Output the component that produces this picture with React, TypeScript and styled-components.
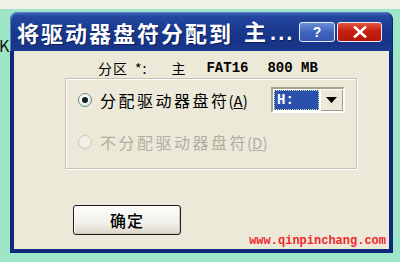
import React from 'react';
import styled, { createGlobalStyle } from 'styled-components';

const GlobalStyle = createGlobalStyle`
  html, body {
    margin: 0;
    padding: 0;
  }
  body {
    font-family: 'Noto Sans CJK SC', 'Noto Sans', sans-serif;
  }
`;

const App = () => {
  return (
    <Root>
      <GlobalStyle />
      <TopStrip />
      <Main>
        <Side>K石</Side>
        <Dialog>
          <TitleBar>
            <Title>
              将驱动器盘符分配到<TitleTail>主<Dots>...</Dots></TitleTail>
            </Title>
            <CapButton>?</CapButton>
            <CapButton $close>
              <svg width="16" height="12" viewBox="0 0 16 12">
                <path d="M3 1.5 L13 10.5 M13 1.5 L3 10.5" stroke="#fff" strokeWidth="2.6" strokeLinecap="square" />
              </svg>
            </CapButton>
          </TitleBar>
          <Body>
            <Info>
              <InfoPart>分区</InfoPart>
              <InfoPart $gap={7}>*:</InfoPart>
              <InfoPart $gap={24}>主</InfoPart>
              <InfoPart $gap={20} $mono>FAT16</InfoPart>
              <InfoPart $gap={19} $mono>800 MB</InfoPart>
            </Info>
            <Group>
              <OptionRow>
                <Radio $checked />
                <OptionLabel>
                  分配驱动器盘符<Paren>(<u>A</u>)</Paren>
                </OptionLabel>
                <Combo>
                  <ComboValue>
                    <Selected>H:</Selected>
                  </ComboValue>
                  <DropButton>
                    <svg width="11" height="6" viewBox="0 0 11 6">
                      <path d="M0 0 H11 L5.5 6 Z" fill="#000" />
                    </svg>
                  </DropButton>
                </Combo>
              </OptionRow>
              <OptionRow>
                <Radio $disabled />
                <OptionLabel $disabled>
                  不分配驱动器盘符<Paren>(<u>D</u>)</Paren>
                </OptionLabel>
              </OptionRow>
            </Group>
            <Footer>
              <OkButton type="button">确定</OkButton>
            </Footer>
            <Watermark>www.qinpinchang.com</Watermark>
          </Body>
        </Dialog>
      </Main>
    </Root>
  );
};

export default App;

const Root = styled.div`
  width: 400px;
  height: 262px;
  overflow: hidden;
  background: #9fe6c7;
  display: flex;
  flex-direction: column;
`;

const TopStrip = styled.div`
  height: 9px;
  background: #eef1e6;
`;

const Main = styled.div`
  display: flex;
  margin-top: 3px;
`;

const Side = styled.div`
  width: 10px;
  overflow: hidden;
  white-space: nowrap;
  padding-top: 24px;
  font-size: 16px;
  line-height: 18px;
  color: #111;
  text-indent: -1px;
`;

const Dialog = styled.div`
  width: 383px;
  height: 241px;
  display: flex;
  flex-direction: column;
`;

const TitleBar = styled.div`
  height: 39px;
  display: flex;
  align-items: center;
  padding: 0 11px 0 7px;
  border-radius: 8px 8px 0 0;
  background: linear-gradient(#4a6cc4 0%, #2447a0 10%, #1a3a8e 45%, #173487 80%, #1c3a90 100%);
  box-shadow: inset 1px 1px 0 #5b7bd0, inset -1px 0 0 #0c2470;
`;

const Title = styled.div`
  flex: 1;
  display: flex;
  align-items: center;
  color: #fff;
  font-size: 22px;
  font-weight: 700;
  letter-spacing: 2px;
  white-space: nowrap;
  text-shadow: 1px 1px 0 #0a1c5c;
  line-height: 24px;
`;

const TitleTail = styled.span`
  margin-left: 11px;
`;

const Dots = styled.span`
  font-family: 'Liberation Sans', sans-serif;
  letter-spacing: 2px;
  margin-left: 2px;
`;

const CapButton = styled.div<{ $close?: boolean }>`
  width: ${(p) => (p.$close ? 45 : 36)}px;
  height: 20px;
  margin-left: 2px;
  box-sizing: border-box;
  border: 1px solid #e8ecf8;
  border-radius: 3px;
  display: flex;
  align-items: center;
  justify-content: center;
  color: #fff;
  font-family: 'Liberation Sans', sans-serif;
  font-weight: 700;
  font-size: 14px;
  background: ${(p) =>
    p.$close
      ? 'linear-gradient(#e0583e, #c8200e 45%, #b5170a)'
      : 'linear-gradient(#6d8ed8, #3f64bd 50%, #3558b2)'};
`;

const Body = styled.div`
  position: relative;
  flex: 1;
  background: #ece9d8;
  border: 4px solid #0f2a7c;
  border-top: none;
  display: flex;
  flex-direction: column;
`;

const Info = styled.div`
  display: flex;
  align-items: center;
  padding: 9px 0 0 84px;
  height: 16px;
  font-size: 14px;
  line-height: 16px;
  color: #000;
`;

const InfoPart = styled.span<{ $gap?: number; $mono?: boolean }>`
  margin-left: ${(p) => p.$gap ?? 0}px;
  letter-spacing: ${(p) => (p.$mono ? 0 : 1)}px;
  white-space: pre;
  font-family: ${(p) => (p.$mono ? "'Liberation Mono', monospace" : "'Noto Sans CJK SC', sans-serif")};
  font-weight: ${(p) => (p.$mono ? 700 : 400)};
`;

const Group = styled.div`
  margin: 2px 0 0 51px;
  width: 292px;
  height: 91px;
  box-sizing: border-box;
  border: 1px solid #c5c2b2;
  box-shadow: inset 1px 1px 0 #fff, 1px 1px 0 #fff;
  padding: 8px 11px 0 12px;
  display: flex;
  flex-direction: column;
  gap: 16px;
`;

const OptionRow = styled.div`
  height: 26px;
  display: flex;
  align-items: center;
`;

const Radio = styled.span<{ $checked?: boolean; $disabled?: boolean }>`
  position: relative;
  width: 14px;
  height: 14px;
  box-sizing: border-box;
  border-radius: 50%;
  border: 1px solid ${(p) => (p.$disabled ? '#cac8bb' : '#6f8a8c')};
  background: ${(p) =>
    p.$disabled ? '#f1efe6' : 'radial-gradient(circle at 40% 35%, #ffffff 20%, #d4e6d8 90%)'};
  &::after {
    content: '';
    display: ${(p) => (p.$checked ? 'block' : 'none')};
    position: absolute;
    left: 3px;
    top: 3px;
    width: 6px;
    height: 6px;
    border-radius: 50%;
    background: #10201a;
  }
`;

const OptionLabel = styled.span<{ $disabled?: boolean }>`
  margin-left: 8px;
  font-size: 16px;
  letter-spacing: 2.5px;
  line-height: 20px;
  white-space: nowrap;
  color: ${(p) => (p.$disabled ? '#b2aea0' : '#000')};
`;

const Paren = styled.span`
  letter-spacing: 0;
  font-size: 15px;
  margin-left: -1px;
`;

const Combo = styled.div`
  margin-left: auto;
  width: 74px;
  height: 26px;
  box-sizing: border-box;
  display: flex;
  border: 2px solid;
  border-color: #a6a393 #fefefc #fefefc #a6a393;
  background: #fff;
`;

const ComboValue = styled.div`
  flex: 1;
  padding: 1px;
  display: flex;
`;

const Selected = styled.div`
  flex: 1;
  box-sizing: border-box;
  border: 1px dotted #c8e8b0;
  background: #2b50ab;
  color: #fff;
  font-family: 'Liberation Mono', monospace;
  font-weight: 700;
  font-size: 14px;
  line-height: 18px;
  padding-left: 2px;
`;

const DropButton = styled.div`
  width: 23px;
  display: flex;
  align-items: center;
  justify-content: center;
  background: #ece9d8;
  box-shadow: inset 1px 1px 0 #fff, inset -1px -1px 0 #a19f90;
`;

const Footer = styled.div`
  margin: 36px 0 0 59px;
`;

const OkButton = styled.button`
  width: 108px;
  height: 30px;
  padding: 0;
  border: 1px solid #1c1c1c;
  border-radius: 3px;
  background: linear-gradient(#fdfdfb, #f2f1ec 60%, #dcd6c8);
  box-shadow: inset -1px -1px 0 #cfc9ba, inset 1px 1px 0 #fff;
  font-family: 'Noto Sans CJK SC', sans-serif;
  font-size: 16px;
  font-weight: 500;
  color: #000;
  letter-spacing: 1px;
`;

const Watermark = styled.div`
  position: absolute;
  right: 3px;
  bottom: 2px;
  font-family: 'Liberation Mono', monospace;
  font-weight: 700;
  font-size: 12px;
  line-height: 12px;
  color: #f0262c;
`;
